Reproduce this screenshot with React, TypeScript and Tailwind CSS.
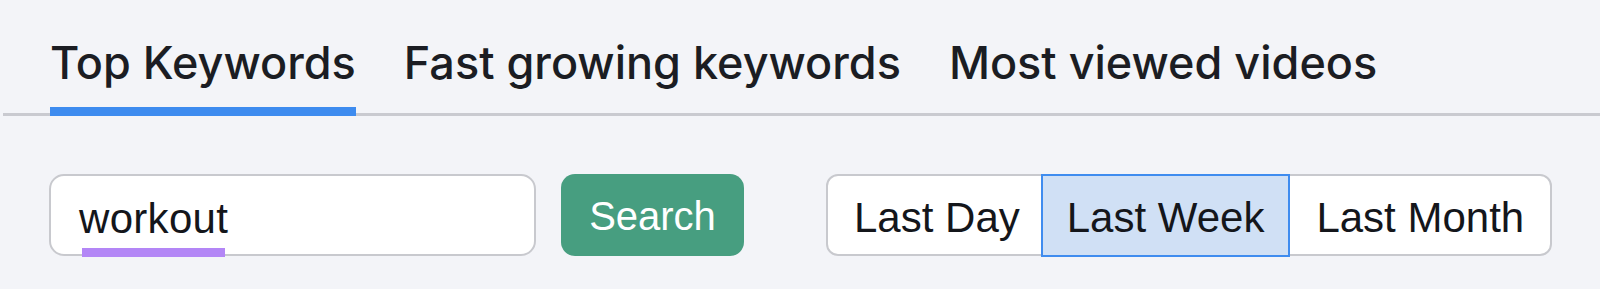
const tabs = ["Top Keywords", "Fast growing keywords", "Most viewed videos"];
const ranges = ["Last Day", "Last Week", "Last Month"];

export default function App() {
  const active = 0;
  const range = 1;

  return (
    <div className="w-[1600px] h-[289px] bg-[#f3f4f8] overflow-hidden">
      {/* tab bar */}
      <div className="ml-[3px] pl-[47px] pt-[36px] flex gap-[48px] border-b-[3px] border-[#c9cad0]">
        {tabs.map((t, i) => (
          <div
            key={t}
            className={
              "-mb-[3px] pb-[17px] border-b-[9px] text-[45px] leading-[54px] font-medium text-[#1b1d23] whitespace-nowrap " +
              (i === active ? "border-[#3d8bef]" : "border-transparent")
            }
            style={{ fontFamily: "Inter, 'Noto Sans', sans-serif" }}
          >
            {t}
          </div>
        ))}
      </div>

      {/* search + range */}
      <div
        className="flex items-center pl-[49px] pt-[58px]"
        style={{ fontFamily: "'Liberation Sans', Arial, sans-serif" }}
      >
        <div className="relative w-[487px] h-[82px] rounded-[15px] border-[2.5px] border-[#c8c9ce] bg-white flex items-center pl-[28px] pt-[6px]">
          <span className="text-[42px] tracking-[0.3px] text-[#14161b]">workout</span>
          <div className="absolute left-[31px] bottom-[-3px] w-[143px] h-[9px] bg-[#b386f6]" />
        </div>

        <button className="ml-[25px] w-[183px] h-[82px] rounded-[14px] bg-[#479e80] text-white text-[40px] pt-[1px]">
          Search
        </button>

        <div className="ml-[82px] h-[82px] flex rounded-[12px] border-[2.5px] border-[#c8c9ce] bg-white">
          {ranges.map((r, i) => (
            <div
              key={r}
              className={
                "flex items-center pt-[5px] text-[42px] text-[#14161b] whitespace-nowrap " +
                (i === range
                  ? "relative px-[24px] bg-[#d0e0f5] border-[2.5px] border-[#3f8cef] -my-[2.5px]"
                  : i === 0
                    ? "pl-[26px] pr-[21px]"
                    : "px-[26px]")
              }
            >
              {r}
            </div>
          ))}
        </div>
      </div>
    </div>
  );
}
